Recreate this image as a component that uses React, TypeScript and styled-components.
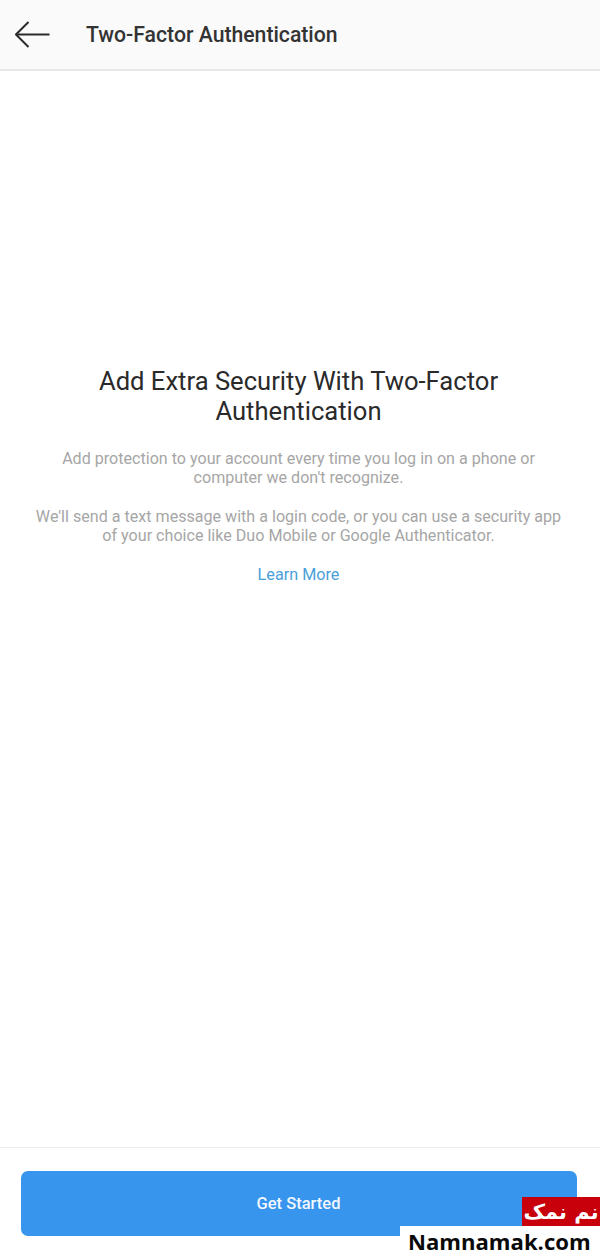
import styled, { createGlobalStyle } from 'styled-components';

const GlobalStyle = createGlobalStyle`
  html, body {
    margin: 0;
    padding: 0;
    background: #ffffff;
  }
  body {
    font-family: Roboto, "Liberation Sans", sans-serif;
  }
`;

const Screen = styled.div`
  position: relative;
  width: 600px;
  height: 1259px;
  display: flex;
  flex-direction: column;
  overflow: hidden;
  background: #ffffff;
`;

const Header = styled.header`
  height: 71px;
  flex: none;
  display: flex;
  align-items: center;
  gap: 35px;
  padding-left: 15px;
  box-sizing: border-box;
  background: #fafafa;
  border-bottom: 2px solid #e8e8e8;
`;

const BackButton = styled.button`
  display: flex;
  width: 36px;
  height: 28px;
  padding: 0;
  border: 0;
  background: none;
  color: #2b2b2b;
`;

const HeaderTitle = styled.h1`
  margin: 0;
  font-size: 21.2px;
  font-weight: 500;
  color: #333333;
`;

const Content = styled.main`
  flex: 1;
  display: flex;
  flex-direction: column;
  align-items: center;
  padding: 295px 3px 0 0;
  text-align: center;
`;

const Title = styled.h2`
  margin: 0 0 23px;
  width: 480px;
  font-size: 25.6px;
  line-height: 30px;
  font-weight: 400;
  color: #2a2a2a;
`;

const Paragraph = styled.p`
  margin: 0 0 20px;
  font-size: 16.1px;
  line-height: 19px;
  color: #a6a6a6;
`;

const LearnMore = styled.a`
  font-size: 16.2px;
  line-height: 19px;
  color: #4a9fd8;
`;

const Footer = styled.footer`
  flex: none;
  height: 112px;
  box-sizing: border-box;
  padding: 23px 23px 0 21px;
  border-top: 1px solid #ececec;
`;

const StartButton = styled.button`
  display: block;
  width: 100%;
  height: 65px;
  padding: 0 1px 0 0;
  border: 0;
  border-radius: 7px;
  background: #3895ee;
  color: #f2f8fe;
  font-family: inherit;
  font-size: 16.5px;
  font-weight: 500;
`;

const Watermark = styled.div`
  position: absolute;
  right: 0;
  bottom: 0;
  display: flex;
  flex-direction: column;
  align-items: flex-end;
`;

const WatermarkBadge = styled.div`
  width: 78px;
  height: 29px;
  display: flex;
  align-items: center;
  justify-content: center;
  background: #c7000b;
  color: #ffffff;
  font-family: "DejaVu Sans", sans-serif;
  font-size: 21px;
  font-weight: 700;
  white-space: nowrap;
`;

const WatermarkSite = styled.div`
  width: 200px;
  height: 33px;
  box-sizing: border-box;
  padding-left: 8px;
  background: #ffffff;
  color: #0a0a0a;
  font-family: "Open Sans", sans-serif;
  font-size: 22.1px;
  line-height: 31px;
  font-weight: 700;
`;

function BackArrow() {
  return (
    <svg width="36" height="28" viewBox="0 0 36 28" fill="none" stroke="currentColor" strokeWidth="2">
      <path d="M1 13.5H34.5" />
      <path d="M13.5 1L1 13.5L13.5 26" />
    </svg>
  );
}

export default function App() {
  return (
    <>
      <GlobalStyle />
      <Screen>
        <Header>
          <BackButton aria-label="Back">
            <BackArrow />
          </BackButton>
          <HeaderTitle>Two-Factor Authentication</HeaderTitle>
        </Header>
        <Content>
          <Title>Add Extra Security With Two-Factor Authentication</Title>
          <Paragraph>
            Add protection to your account every time you log in on a phone or
            <br />
            computer we don't recognize.
          </Paragraph>
          <Paragraph>
            We'll send a text message with a login code, or you can use a security app
            <br />
            of your choice like Duo Mobile or Google Authenticator.
          </Paragraph>
          <LearnMore>Learn More</LearnMore>
        </Content>
        <Footer>
          <StartButton>Get Started</StartButton>
        </Footer>
        <Watermark>
          <WatermarkBadge>نم نمک</WatermarkBadge>
          <WatermarkSite>Namnamak.com</WatermarkSite>
        </Watermark>
      </Screen>
    </>
  );
}
